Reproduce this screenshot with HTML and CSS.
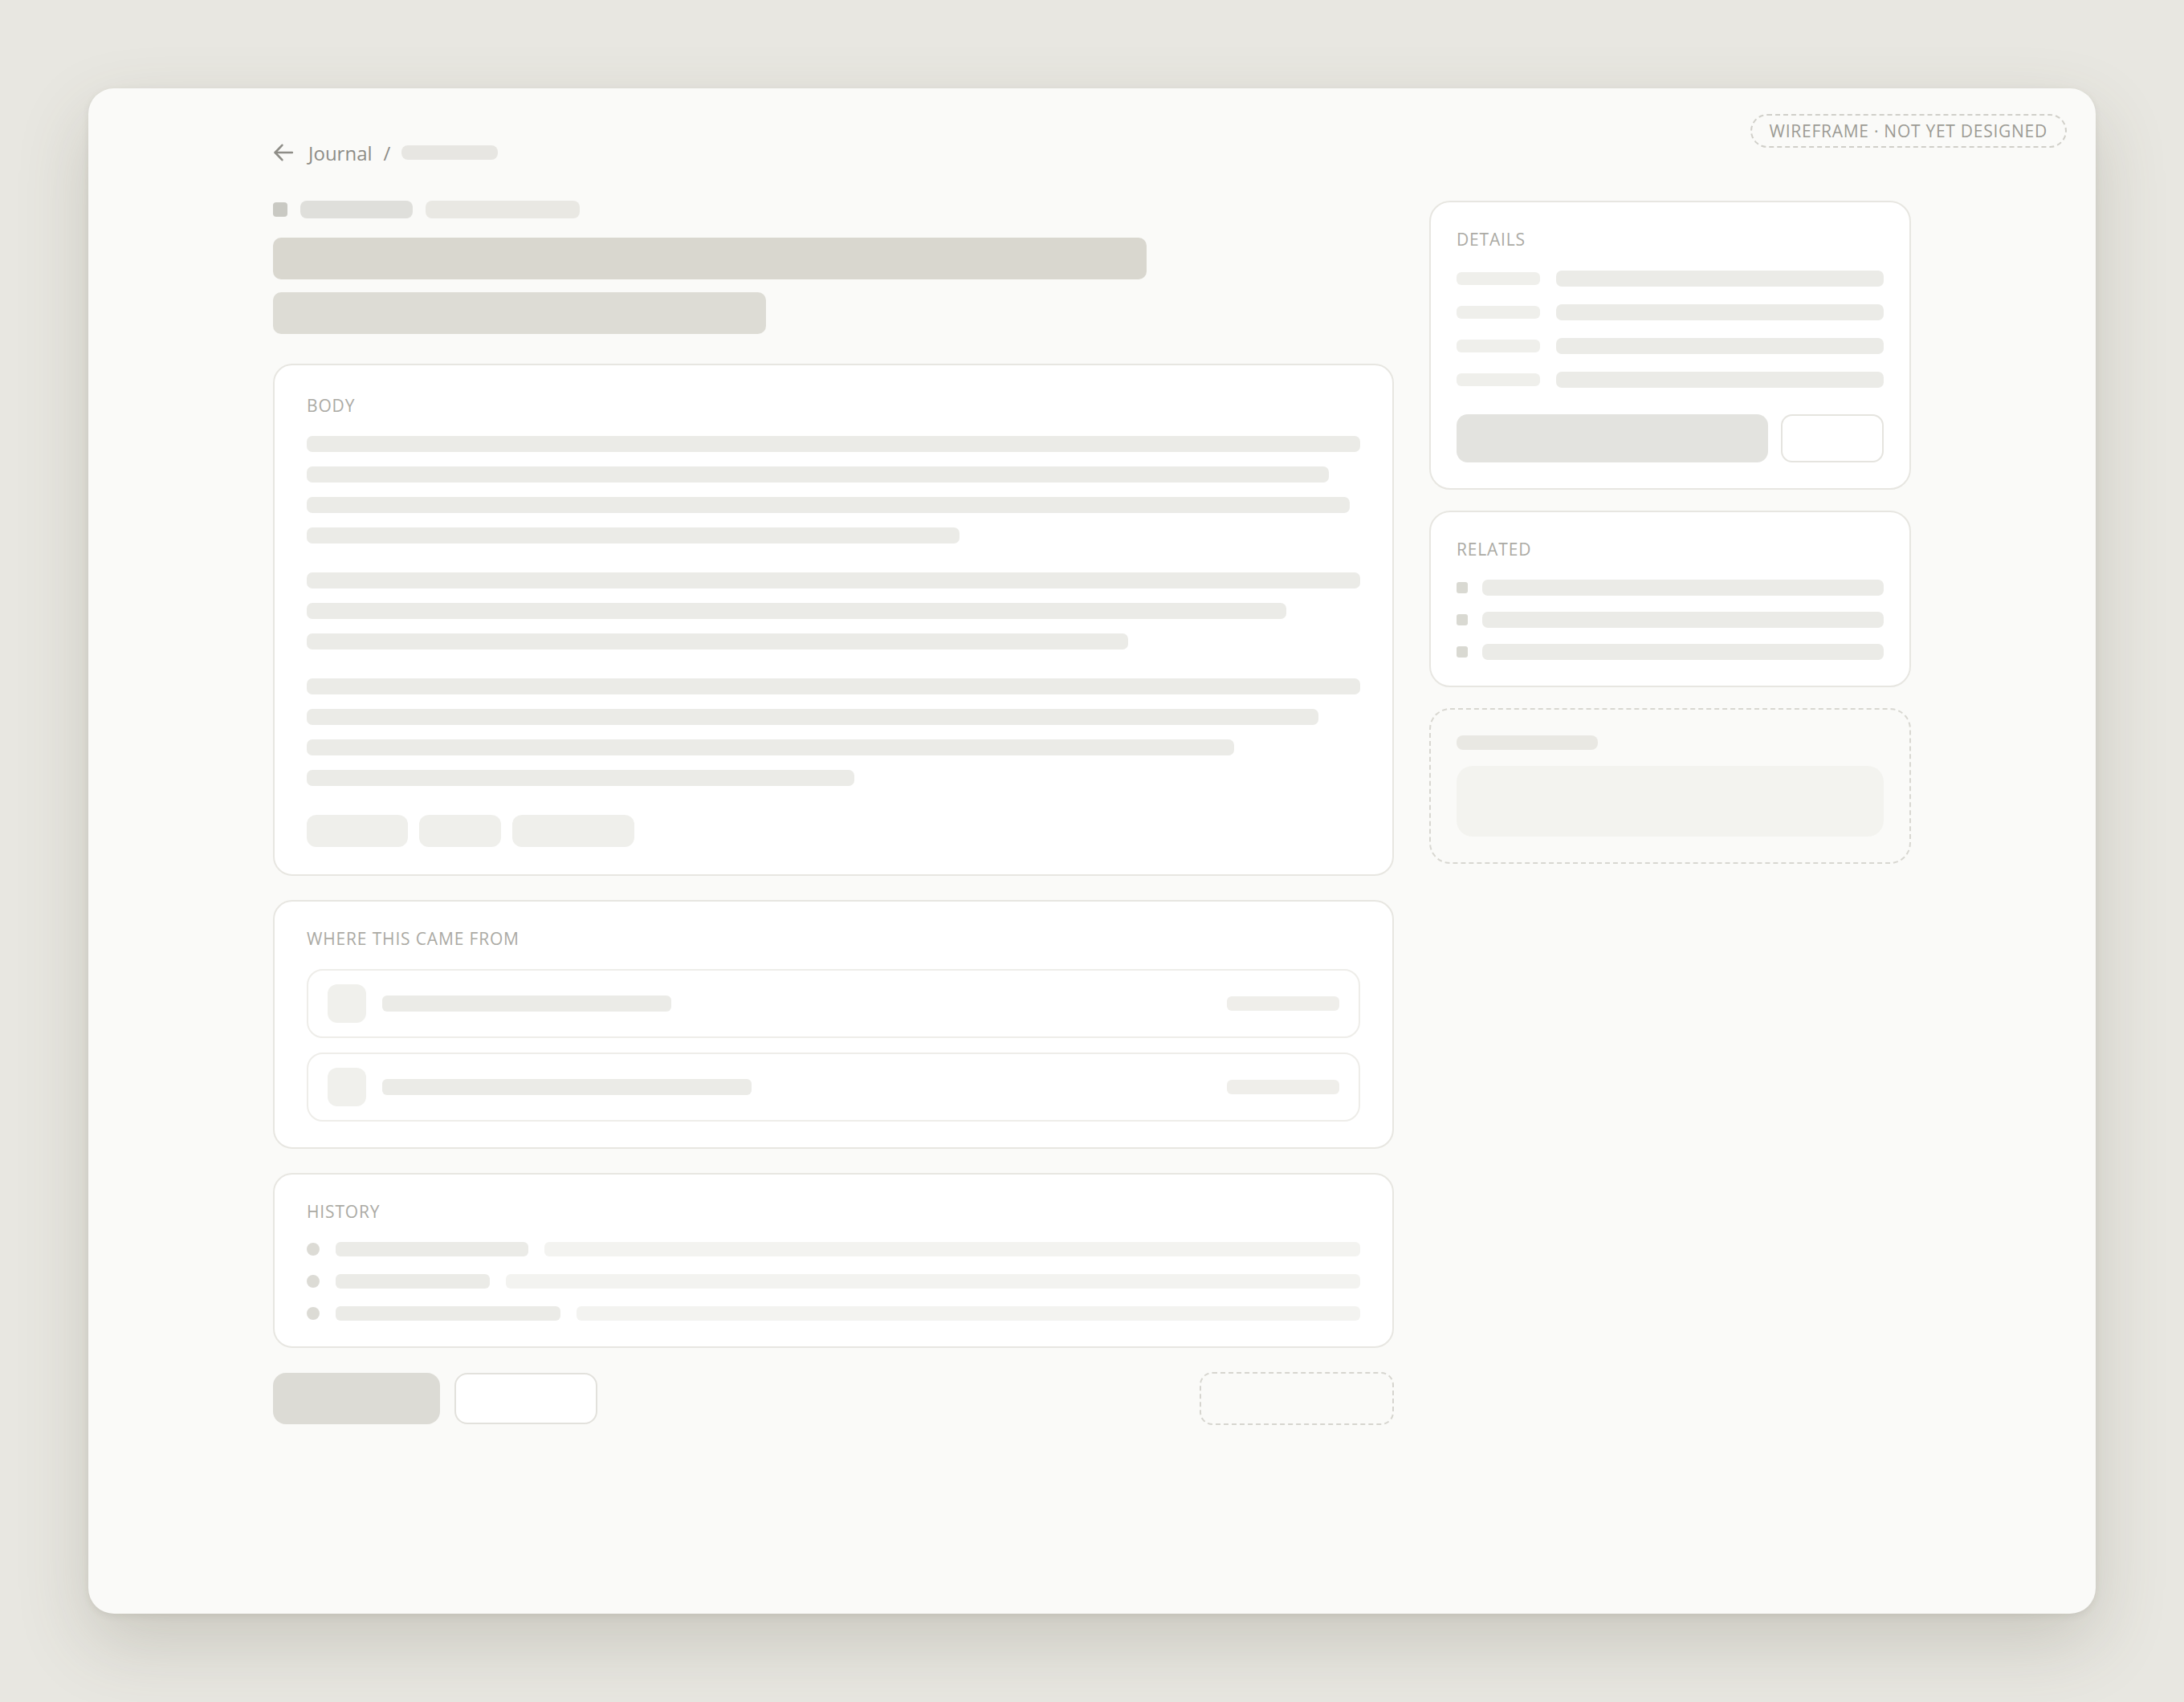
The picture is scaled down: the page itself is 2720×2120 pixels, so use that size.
FILE: index.html
```html
<!DOCTYPE html>
<html lang="en">
<head>
<meta charset="utf-8">
<title>Journal entry — wireframe</title>
<link rel="stylesheet" href="styles.css">
</head>
<body>
<div class="window">
  <div class="badge">WIREFRAME · NOT YET DESIGNED</div>
  <div class="content">
    <nav class="crumbs">
      <svg class="back" viewBox="0 0 24 24" fill="none" stroke="currentColor" stroke-width="2.4" stroke-linecap="round" stroke-linejoin="round" aria-hidden="true"><path d="M22 12H2.5"/><path d="M10.5 3.5L2.5 12l8 8.5"/></svg>
      <span class="crumb">Journal</span>
      <span class="sep">/</span>
      <span class="crumb-bar"></span>
    </nav>
    <div class="layout">
      <div class="main">
        <div class="meta">
          <span class="meta-dot"></span>
          <span class="meta-a"></span>
          <span class="meta-b"></span>
        </div>
        <div class="title title-1"></div>
        <div class="title title-2"></div>

        <section class="panel panel-body">
          <div class="label">Body</div>
          <div class="para">
            <div class="line" style="width:100%"></div>
            <div class="line" style="width:97%"></div>
            <div class="line" style="width:99%"></div>
            <div class="line" style="width:62%"></div>
          </div>
          <div class="para">
            <div class="line" style="width:100%"></div>
            <div class="line" style="width:93%"></div>
            <div class="line" style="width:78%"></div>
          </div>
          <div class="para">
            <div class="line" style="width:100%"></div>
            <div class="line" style="width:96%"></div>
            <div class="line" style="width:88%"></div>
            <div class="line" style="width:52%"></div>
          </div>
          <div class="tags">
            <span class="tag" style="width:126px"></span>
            <span class="tag" style="width:102px"></span>
            <span class="tag" style="width:152px"></span>
          </div>
        </section>

        <section class="panel">
          <div class="label">Where this came from</div>
          <div class="sources">
            <div class="source">
              <span class="source-icon"></span>
              <span class="source-bar" style="width:360px"></span>
              <span class="source-meta"></span>
            </div>
            <div class="source">
              <span class="source-icon"></span>
              <span class="source-bar" style="width:460px"></span>
              <span class="source-meta"></span>
            </div>
          </div>
        </section>

        <section class="panel">
          <div class="label">History</div>
          <div class="history">
            <div class="event"><span class="event-dot"></span><span class="event-a" style="width:240px"></span><span class="event-b"></span></div>
            <div class="event"><span class="event-dot"></span><span class="event-a" style="width:192px"></span><span class="event-b"></span></div>
            <div class="event"><span class="event-dot"></span><span class="event-a" style="width:280px"></span><span class="event-b"></span></div>
          </div>
        </section>

        <div class="actions">
          <span class="btn btn-primary"></span>
          <span class="btn btn-secondary"></span>
          <span class="btn btn-ghost"></span>
        </div>
      </div>

      <aside class="side">
        <section class="panel panel-side">
          <div class="label">Details</div>
          <div class="details">
            <div class="detail"><span class="detail-key"></span><span class="detail-val"></span></div>
            <div class="detail"><span class="detail-key"></span><span class="detail-val"></span></div>
            <div class="detail"><span class="detail-key"></span><span class="detail-val"></span></div>
            <div class="detail"><span class="detail-key"></span><span class="detail-val"></span></div>
          </div>
          <div class="side-actions">
            <span class="side-primary"></span>
            <span class="side-secondary"></span>
          </div>
        </section>

        <section class="panel panel-side">
          <div class="label">Related</div>
          <div class="related">
            <div class="rel"><span class="rel-dot"></span><span class="rel-bar"></span></div>
            <div class="rel"><span class="rel-dot"></span><span class="rel-bar"></span></div>
            <div class="rel"><span class="rel-dot"></span><span class="rel-bar"></span></div>
          </div>
        </section>

        <section class="placeholder">
          <div class="ph-bar"></div>
          <div class="ph-box"></div>
        </section>
      </aside>
    </div>
  </div>
</div>
</body>
</html>
```

FILE: styles.css
```css
* {
  box-sizing: border-box;
}

html,
body {
  margin: 0;
}

body {
  background: #e8e7e1;
  font-family: "Open Sans", "Liberation Sans", sans-serif;
  padding: 110px;
  min-height: 2120px;
}

.window {
  position: relative;
  width: 2500px;
  height: 1900px;
  background: #fafaf8;
  border-radius: 32px;
  padding-top: 60px;
  box-shadow: 0 3px 8px rgba(80, 74, 56, 0.10), 0 36px 90px rgba(80, 74, 56, 0.20);
}

.badge {
  position: absolute;
  top: 32px;
  right: 36px;
  font-size: 21px;
  line-height: 26px;
  letter-spacing: 0.035em;
  color: #9c9b94;
  padding: 6px 22px;
  border: 2px dashed #d0cfc9;
  border-radius: 999px;
}

.content {
  width: 2040px;
  margin: 0 auto;
}

/* breadcrumb */
.crumbs {
  display: flex;
  align-items: center;
  gap: 14px;
  height: 40px;
  margin-bottom: 40px;
  color: #8e8d87;
  font-size: 24px;
}

.back {
  width: 26px;
  height: 26px;
  margin-right: 4px;
}

.crumb-bar {
  width: 120px;
  height: 18px;
  border-radius: 8px;
  background: #e7e6e2;
}

/* layout */
.layout {
  display: grid;
  grid-template-columns: 1fr 600px;
  gap: 44px;
  align-items: start;
}

.main {
  display: flex;
  flex-direction: column;
}

.meta {
  display: flex;
  align-items: center;
  gap: 16px;
  height: 22px;
}

.meta-dot {
  width: 18px;
  height: 18px;
  border-radius: 4px;
  background: #c9c9c3;
}

.meta-a {
  width: 140px;
  height: 22px;
  border-radius: 8px;
  background: #dfdfdb;
}

.meta-b {
  width: 192px;
  height: 22px;
  border-radius: 8px;
  background: #e9e8e3;
}

.title {
  height: 52px;
  border-radius: 10px;
}

.title-1 {
  width: 1088px;
  margin-top: 24px;
  background: #d9d7cf;
}

.title-2 {
  width: 614px;
  margin-top: 16px;
  background: #dddcd5;
}

/* panels */
.panel {
  background: #ffffff;
  border: 2px solid #e7e6e1;
  border-radius: 24px;
  padding: 32px 40px;
  margin-top: 30px;
}

.panel-body {
  margin-top: 37px;
  padding: 36px 40px 34px;
}

.label {
  font-size: 21px;
  line-height: 28px;
  letter-spacing: 0.04em;
  color: #abaaa4;
  text-transform: uppercase;
  margin-bottom: 24px;
}

.para {
  display: flex;
  flex-direction: column;
  gap: 18px;
}

.para + .para {
  margin-top: 36px;
}

.line {
  height: 20px;
  border-radius: 7px;
  background: #ebebe7;
}

.tags {
  display: flex;
  gap: 14px;
  margin-top: 36px;
}

.tag {
  height: 40px;
  border-radius: 12px;
  background: #efefeb;
}

/* sources */
.sources {
  display: flex;
  flex-direction: column;
  gap: 18px;
}

.source {
  display: flex;
  align-items: center;
  gap: 20px;
  padding: 17px 24px;
  border: 2px solid #eeede9;
  border-radius: 20px;
}

.source-icon {
  width: 48px;
  height: 48px;
  border-radius: 12px;
  background: #f0f0ec;
}

.source-bar {
  height: 20px;
  border-radius: 6px;
  background: #ebebe7;
}

.source-meta {
  width: 140px;
  height: 18px;
  margin-left: auto;
  border-radius: 6px;
  background: #efeeea;
}

/* history */
.history {
  display: flex;
  flex-direction: column;
  gap: 22px;
}

.event {
  display: flex;
  align-items: center;
  gap: 20px;
  height: 18px;
}

.event-dot {
  width: 16px;
  height: 16px;
  border-radius: 50%;
  background: #dcdbd5;
}

.event-a {
  height: 18px;
  border-radius: 6px;
  background: #ebebe7;
}

.event-b {
  flex: 1;
  height: 18px;
  border-radius: 6px;
  background: #f3f3f0;
}

/* bottom actions */
.actions {
  display: flex;
  align-items: center;
  gap: 18px;
  margin-top: 30px;
}

.btn {
  height: 64px;
  border-radius: 16px;
}

.btn-primary {
  width: 208px;
  background: #dcdbd5;
}

.btn-secondary {
  width: 178px;
  background: #ffffff;
  border: 2px solid #e2e1dc;
}

.btn-ghost {
  width: 242px;
  height: 66px;
  margin-left: auto;
  border: 2px dashed #d6d5cf;
}

/* sidebar */
.side {
  display: flex;
  flex-direction: column;
  gap: 26px;
}

.side .panel {
  margin-top: 0;
}

.panel-side {
  padding: 32px;
  border-radius: 26px;
}

.details {
  display: flex;
  flex-direction: column;
  gap: 20px;
}

.detail {
  display: flex;
  align-items: center;
  gap: 20px;
  height: 22px;
}

.detail-key {
  width: 104px;
  height: 16px;
  border-radius: 6px;
  background: #efefeb;
}

.detail-val {
  flex: 1;
  height: 20px;
  border-radius: 7px;
  background: #ebebe7;
}

.side-actions {
  display: flex;
  gap: 16px;
  margin-top: 32px;
}

.side-primary {
  flex: 1;
  height: 60px;
  border-radius: 14px;
  background: #e3e3df;
}

.side-secondary {
  width: 128px;
  height: 60px;
  border-radius: 14px;
  background: #ffffff;
  border: 2px solid #e5e4df;
}

.related {
  display: flex;
  flex-direction: column;
  gap: 20px;
}

.rel {
  display: flex;
  align-items: center;
  gap: 18px;
  height: 20px;
}

.rel-dot {
  width: 14px;
  height: 14px;
  border-radius: 3px;
  background: #d9d9d2;
}

.rel-bar {
  flex: 1;
  height: 20px;
  border-radius: 7px;
  background: #ebebe7;
}

.placeholder {
  padding: 32px;
  border: 2px dashed #d8d7d1;
  border-radius: 26px;
}

.ph-bar {
  width: 176px;
  height: 18px;
  border-radius: 8px;
  background: #e9e8e3;
}

.ph-box {
  height: 88px;
  margin-top: 20px;
  border-radius: 20px;
  background: #f3f3ef;
}
```
